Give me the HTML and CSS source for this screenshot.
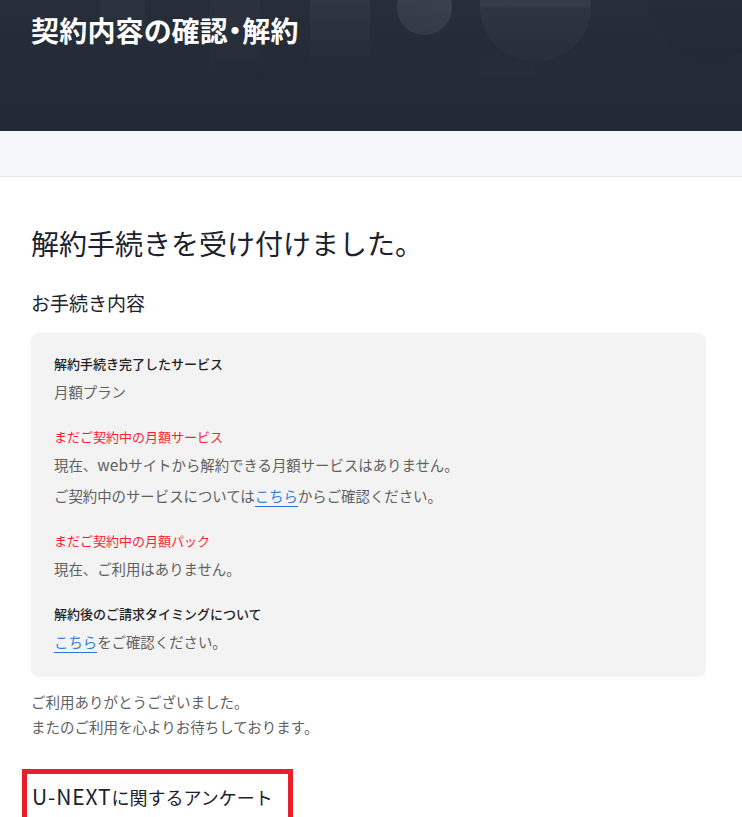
FILE: index.html
```html
<!DOCTYPE html>
<html lang="ja">
<head>
<meta charset="utf-8">
<title>契約内容の確認・解約</title>
<link rel="stylesheet" href="styles.css">
</head>
<body>
<header class="hero">
  <div class="deco deco-a"></div>
  <div class="deco deco-b"></div>
  <div class="deco deco-c"></div>
  <div class="deco deco-circle"></div>
  <div class="deco deco-u"></div>
  <div class="deco deco-u-foot"></div>
  <div class="deco deco-right"></div>
  <h1 class="hero-title">契約内容の確認・解約</h1>
</header>
<div class="subbar"></div>
<main class="main">
  <h1 class="page-title">解約手続きを受け付けました。</h1>
  <h2 class="section-title">お手続き内容</h2>
  <section class="panel">
    <div class="group">
      <p class="label">解約手続き完了したサービス</p>
      <p class="value">月額プラン</p>
    </div>
    <div class="group">
      <p class="label label-red">まだご契約中の月額サービス</p>
      <p class="value">現在、<span class="latin">web</span>サイトから解約できる月額サービスはありません。</p>
      <p class="value">ご契約中のサービスについては<a class="link" href="#">こちら</a>からご確認ください。</p>
    </div>
    <div class="group">
      <p class="label label-red">まだご契約中の月額パック</p>
      <p class="value">現在、ご利用はありません。</p>
    </div>
    <div class="group">
      <p class="label">解約後のご請求タイミングについて</p>
      <p class="value"><a class="link" href="#">こちら</a>をご確認ください。</p>
    </div>
  </section>
  <p class="thanks">ご利用ありがとうございました。<br>またのご利用を心よりお待ちしております。</p>
  <h2 class="survey-title"><span class="brand">U-NEXT</span>に関するアンケート</h2>
</main>
</body>
</html>
```
FILE: styles.css
```css
* { box-sizing: border-box; }
html, body { margin: 0; padding: 0; }
body {
  font-family: "Noto Sans CJK JP", "Noto Sans", sans-serif;
  background: #fff;
  color: #1f2631;
  overflow: hidden;
}
p, h1, h2 { margin: 0; }

.hero {
  position: relative;
  height: 131px;
  background: linear-gradient(180deg, #272e3a 0%, #232b37 55%, #222a37 100%);
  padding: 10px 31px 0;
  overflow: hidden;
}
.hero-title {
  position: relative;
  font-size: 28px;
  line-height: 40px;
  font-weight: 700;
  color: #fff;
  font-feature-settings: "palt";
  letter-spacing: 0.2px;
}
.deco { position: absolute; }
.deco-a {
  left: 100px; top: 0; width: 45px; height: 50px;
  background: linear-gradient(180deg, rgba(255,255,255,0.03), rgba(255,255,255,0));
}
.deco-b {
  left: 210px; top: 0; width: 50px; height: 75px;
  background: linear-gradient(180deg, rgba(255,255,255,0.025), rgba(255,255,255,0.005));
}
.deco-c {
  left: 310px; top: 0; width: 60px; height: 70px;
  background: linear-gradient(180deg, rgba(255,255,255,0.04), rgba(255,255,255,0));
}
.deco-circle {
  left: 397px; top: -20px; width: 55px; height: 55px;
  border-radius: 50%;
  background: linear-gradient(200deg, rgba(255,255,255,0.11), rgba(255,255,255,0.06));
}
.deco-u {
  left: 480px; top: -50px; width: 111px; height: 112px;
  border-radius: 0 0 56px 56px;
  background: linear-gradient(180deg, rgba(255,255,255,0.07) 0%, rgba(255,255,255,0.07) 50%, rgba(255,255,255,0.035) 52%, rgba(255,255,255,0.015) 100%);
}
.deco-u-foot {
  left: 480px; top: 62px; width: 55px; height: 15px;
  background: rgba(255,255,255,0.012);
}
.deco-right {
  left: 647px; top: -70px; width: 130px; height: 130px;
  border-radius: 50%;
  background: rgba(0,0,0,0.025);
}

.subbar {
  height: 46px;
  background: #f5f6f8;
  border-bottom: 1px solid #e4e5e8;
}

.main {
  padding: 46px 36px 0 31px;
}
.page-title {
  font-size: 28px;
  line-height: 40px;
  font-weight: 400;
  color: #1c222c;
}
.section-title {
  margin-top: 26px;
  font-size: 19px;
  line-height: 28px;
  font-weight: 400;
  color: #1c222c;
}
.panel {
  margin-top: 16px;
  background: #f3f3f3;
  border-radius: 8px;
  padding: 21px 23px 24px;
  display: flex;
  flex-direction: column;
  gap: 24px;
}
.group {
  display: flex;
  flex-direction: column;
  gap: 9px;
}
.label {
  font-size: 13px;
  line-height: 20px;
  font-weight: 500;
  color: #222;
  margin-bottom: -2px;
}
.label-red { color: #ff1f35; font-weight: 400; }
.value {
  font-size: 14.4px;
  line-height: 22px;
  color: #606060;
}
.latin { font-size: 15.5px; letter-spacing: 0.2px; line-height: 1; }
.link {
  color: #3b7fd6;
  text-decoration: none;
  border-bottom: 1px solid #2d74d0;
}
.thanks {
  margin-top: 12px;
  font-size: 14.5px;
  line-height: 25px;
  color: #606060;
}
.survey-title {
  display: inline-block;
  margin: 30px 0 0 -9px;
  padding: 8px 15px 6px 5px;
  border: 5px solid #e8202a;
  font-size: 18px;
  line-height: 30px;
  font-weight: 400;
  color: #1c222c;
}
.brand { font-size: 21px; letter-spacing: 0.9px; line-height: 1; }
```
